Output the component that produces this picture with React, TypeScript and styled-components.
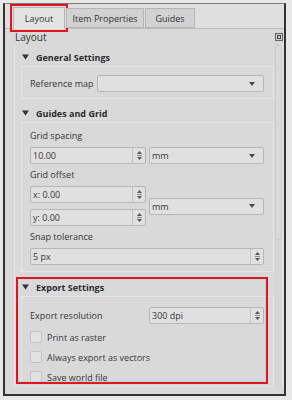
import React from 'react';
import styled, { createGlobalStyle } from 'styled-components';

const GlobalStyle = createGlobalStyle`
  html, body {
    margin: 0;
    padding: 0;
    background: #e8e8e8;
  }
  body {
    font-family: 'Open Sans', 'Liberation Sans', sans-serif;
    font-size: 9px;
    color: #363636;
  }
`;

const Frame = styled.div`
  box-sizing: border-box;
  width: 283px;
  height: 393px;
  margin: 3px 0 0 3px;
  border: 2px solid #333;
  border-top: 1px solid #7c7c7c;
  background: #d9d9d9;
  display: flex;
  flex-direction: column;
  overflow: hidden;
`;

const TabBar = styled.div`
  box-sizing: border-box;
  flex: none;
  height: 25px;
  display: flex;
  align-items: flex-end;
  padding-left: 8px;
  background: #dfdfdf;
  border-bottom: 1px solid #bdbdbd;
`;

const Tab = styled.div<{ $active?: boolean; $w: number; $marked?: boolean }>`
  box-sizing: border-box;
  width: ${(p) => p.$w}px;
  height: ${(p) => (p.$active ? 22 : 20)}px;
  margin-bottom: ${(p) => (p.$active ? -1 : 0)}px;
  margin-right: 1px;
  display: flex;
  align-items: center;
  justify-content: center;
  border: 1px solid #b5b5b5;
  border-bottom: ${(p) => (p.$active ? 'none' : '1px solid #b5b5b5')};
  background: ${(p) => (p.$active ? '#e3e3e3' : '#d2d2d2')};
  color: #333;
  outline: ${(p) => (p.$marked ? '2px solid #e5141b' : 'none')};
  outline-offset: 1px;
  position: relative;
  z-index: 1;
`;

const Panel = styled.div`
  flex: 1;
  min-height: 0;
  display: flex;
  flex-direction: column;
`;

const TitleRow = styled.div`
  flex: none;
  height: 16px;
  display: flex;
  align-items: center;
  justify-content: space-between;
  padding-left: 10px;
  padding-right: 1px;
  font-size: 10px;
  color: #333;
`;

const Body = styled.div`
  flex: 1;
  min-height: 0;
  display: flex;
  padding-left: 9px;
  padding-bottom: 7px;
`;

const ScrollArea = styled.div`
  box-sizing: border-box;
  width: 260px;
  border-left: 1px solid #e4e4e4;
  border-bottom: 1px solid #e4e4e4;
  padding-left: 6px;
  overflow: hidden;
  display: flex;
  flex-direction: column;
`;

const Scrollbar = styled.div`
  box-sizing: border-box;
  width: 8px;
  margin-left: 1px;
  border-right: 1px solid #e8e8e8;
  background: #d6d6d6;
  display: flex;
  flex-direction: column;
`;

const ScrollThumb = styled.div`
  box-sizing: border-box;
  height: 195px;
  background: #dadada;
  border: 1px solid #cbcbcb;
  border-radius: 2px;
`;

const Section = styled.div<{ $gap: number }>`
  margin-top: ${(p) => p.$gap}px;
  position: relative;
`;

const SectionHeader = styled.div`
  height: 18px;
  display: flex;
  align-items: center;
  gap: 7px;
  padding-left: 1px;
  font-weight: 700;
  color: #2c2c2c;
`;

const GroupBox = styled.div<{ $top: number; $bottom: number }>`
  border: 1px solid #e6e6e6;
  padding: ${(p) => p.$top}px 9px ${(p) => p.$bottom}px 8px;
  display: flex;
  flex-direction: column;
`;

const Label = styled.div`
  height: 13px;
  line-height: 13px;
  margin: 4px 0 5px;
  &:first-child {
    margin-top: 0;
  }
`;

const FieldRow = styled.div<{ $cols: string }>`
  display: grid;
  grid-template-columns: ${(p) => p.$cols};
  column-gap: 3px;
  align-items: center;
`;

const OffsetStack = styled.div`
  display: flex;
  flex-direction: column;
  gap: 6px;
`;

const Input = styled.div`
  box-sizing: border-box;
  height: 17px;
  border: 1px solid #b6b6b6;
  border-radius: 2px;
  background: #e0e0e0;
  display: flex;
  align-items: center;
  padding-left: 2px;
  color: #363636;
`;

const InputText = styled.span`
  flex: 1;
`;

const SpinButtons = styled.div`
  box-sizing: border-box;
  width: 13px;
  height: 100%;
  border-left: 1px solid #c4c4c4;
  display: flex;
  align-items: center;
  justify-content: center;
`;

const ComboArrow = styled.div`
  width: 0;
  height: 0;
  margin-right: 8px;
  border-left: 3px solid transparent;
  border-right: 3px solid transparent;
  border-top: 4px solid #4a4a4a;
`;

const CheckRow = styled.div<{ $first?: boolean }>`
  height: 20px;
  margin-top: ${(p) => (p.$first ? 3 : 0)}px;
  display: flex;
  align-items: center;
  gap: 5px;
`;

const CheckBox = styled.div`
  box-sizing: border-box;
  width: 12px;
  height: 12px;
  border: 1px solid #c3c3c3;
  border-radius: 2px;
  background: #e2e2e2;
`;

const Marker = styled.div`
  position: absolute;
  left: -5px;
  top: -1px;
  width: 252px;
  height: 107px;
  box-sizing: border-box;
  border: 2px solid #e5141b;
  box-shadow: inset 1px 1px 0 rgba(150, 225, 235, 0.6), inset -1px -1px 0 rgba(150, 225, 235, 0.6);
  pointer-events: none;
`;

const Triangle = () => (
  <svg width="7" height="6" viewBox="0 0 7 6">
    <path d="M0 0.5 L7 0.5 L3.5 5.5 Z" fill="#333" />
  </svg>
);

const SpinIcon = () => (
  <svg width="7" height="11" viewBox="0 0 7 11">
    <path d="M1 4 L3.5 1 L6 4 Z" fill="#555" />
    <path d="M1 5.5 L6 5.5" stroke="#8a8a8a" strokeWidth="1" />
    <path d="M1 7 L3.5 10 L6 7 Z" fill="#555" />
  </svg>
);

const FloatIcon = () => (
  <svg width="8" height="8" viewBox="0 0 8 8">
    <rect x="0.5" y="0.5" width="7" height="7" fill="#cfcfcf" stroke="#666" />
    <rect x="2.5" y="2.5" width="3" height="3" fill="none" stroke="#444" />
  </svg>
);

const Spin = ({ value }: { value: string }) => (
  <Input>
    <InputText>{value}</InputText>
    <SpinButtons>
      <SpinIcon />
    </SpinButtons>
  </Input>
);

const Combo = ({ value }: { value?: string }) => (
  <Input>
    <InputText>{value}</InputText>
    <ComboArrow />
  </Input>
);

const App = () => {
  return (
    <>
      <GlobalStyle />
      <Frame>
        <TabBar>
          <Tab $active $marked $w={52}>
            Layout
          </Tab>
          <Tab $w={78}>Item Properties</Tab>
          <Tab $w={50}>Guides</Tab>
        </TabBar>
        <Panel>
          <TitleRow>
            <span>Layout</span>
            <FloatIcon />
          </TitleRow>
          <Body>
            <ScrollArea>
              <Section $gap={3}>
                <SectionHeader>
                  <Triangle />
                  General Settings
                </SectionHeader>
                <GroupBox $top={8} $bottom={6}>
                  <FieldRow $cols="64px 1fr">
                    <span>Reference map</span>
                    <Combo />
                  </FieldRow>
                </GroupBox>
              </Section>

              <Section $gap={5}>
                <SectionHeader>
                  <Triangle />
                  Guides and Grid
                </SectionHeader>
                <GroupBox $top={6} $bottom={6}>
                  <Label>Grid spacing</Label>
                  <FieldRow $cols="116px 1fr">
                    <Spin value="10.00" />
                    <Combo value="mm" />
                  </FieldRow>
                  <Label>Grid offset</Label>
                  <FieldRow $cols="116px 1fr">
                    <OffsetStack>
                      <Spin value="x: 0.00" />
                      <Spin value="y: 0.00" />
                    </OffsetStack>
                    <Combo value="mm" />
                  </FieldRow>
                  <Label>Snap tolerance</Label>
                  <Spin value="5 px" />
                </GroupBox>
              </Section>

              <Section $gap={6}>
                <SectionHeader>
                  <Triangle />
                  Export Settings
                </SectionHeader>
                <GroupBox $top={10} $bottom={6}>
                  <FieldRow $cols="116px 1fr">
                    <span>Export resolution</span>
                    <Spin value="300 dpi" />
                  </FieldRow>
                  <CheckRow $first>
                    <CheckBox />
                    Print as raster
                  </CheckRow>
                  <CheckRow>
                    <CheckBox />
                    Always export as vectors
                  </CheckRow>
                  <CheckRow>
                    <CheckBox />
                    Save world file
                  </CheckRow>
                </GroupBox>
                <Marker />
              </Section>
            </ScrollArea>
            <Scrollbar>
              <ScrollThumb />
            </Scrollbar>
          </Body>
        </Panel>
      </Frame>
    </>
  );
};

export default App;
